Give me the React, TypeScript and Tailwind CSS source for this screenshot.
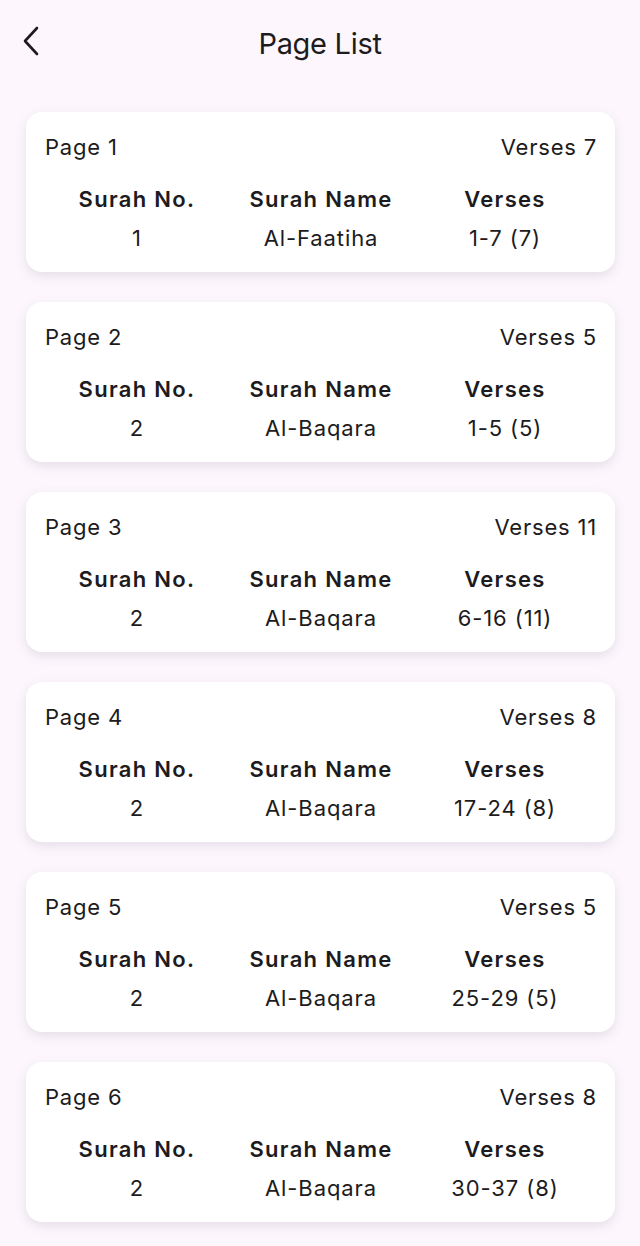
import React from "react";

const pages = [
  { page: 1, total: 7, no: 1, name: "Al-Faatiha", verses: "1-7 (7)" },
  { page: 2, total: 5, no: 2, name: "Al-Baqara", verses: "1-5 (5)" },
  { page: 3, total: 11, no: 2, name: "Al-Baqara", verses: "6-16 (11)" },
  { page: 4, total: 8, no: 2, name: "Al-Baqara", verses: "17-24 (8)" },
  { page: 5, total: 5, no: 2, name: "Al-Baqara", verses: "25-29 (5)" },
  { page: 6, total: 8, no: 2, name: "Al-Baqara", verses: "30-37 (8)" },
];

export default function App() {
  return (
    <div
      className="min-h-[1246px] w-[640px] bg-[#fdf7fd] text-[#1d1b20]"
      style={{ fontFamily: "Inter, 'Noto Sans', sans-serif" }}
    >
      <header className="relative flex h-[86px] items-center justify-center">
        <button className="absolute left-[19px] top-[25px] flex h-[32px] w-[24px] items-center justify-center">
          <svg width="18" height="30" viewBox="0 0 18 30" fill="none">
            <path d="M15 2 L3 15 L15 28" stroke="#1d1b20" strokeWidth="2.6" strokeLinecap="round" strokeLinejoin="round" />
          </svg>
        </button>
        <h1 className="text-[29px] font-normal leading-none tracking-[-0.3px]">Page List</h1>
      </header>
      <main className="flex flex-col gap-[30px] pl-[26px] pr-[25px] pt-[26px] pb-[24px]">
        {pages.map((p) => (
          <div
            key={p.page}
            className="flex h-[160px] flex-col rounded-[16px] bg-white pl-[19px] pr-[18px] pt-[20px] shadow-[0_4px_12px_rgba(60,40,80,0.12)]"
          >
            <div className="flex items-center justify-between text-[22px] leading-[30px] tracking-[0.8px]">
              <span>Page {p.page}</span>
              <span>Verses {p.total}</span>
            </div>
            <div className="mt-[22px] grid grid-cols-3 text-center text-[22px] font-semibold leading-[30px] tracking-[1.3px]">
              <span>Surah No.</span>
              <span>Surah Name</span>
              <span>Verses</span>
            </div>
            <div className="mt-[9px] grid grid-cols-3 text-center text-[22px] leading-[30px] tracking-[0.9px]">
              <span>{p.no}</span>
              <span>{p.name}</span>
              <span>{p.verses}</span>
            </div>
          </div>
        ))}
      </main>
    </div>
  );
}
